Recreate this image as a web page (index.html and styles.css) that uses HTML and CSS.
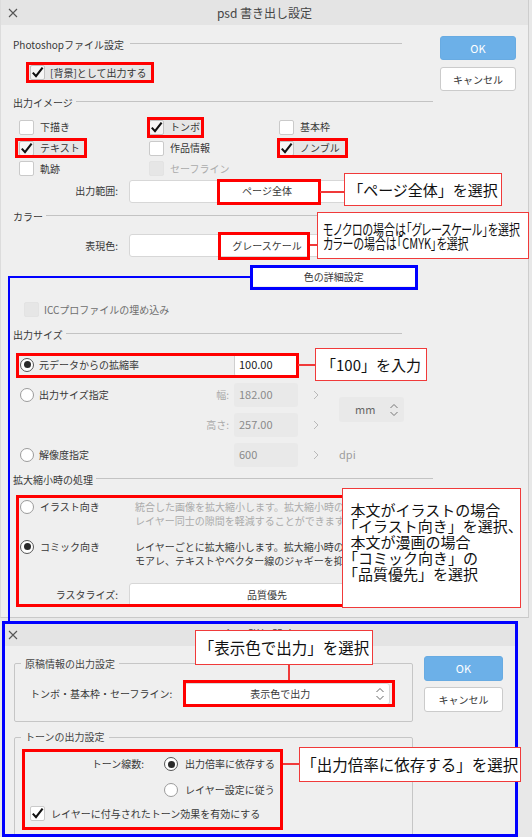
FILE: index.html
```html
<!DOCTYPE html>
<html lang="ja">
<head>
<meta charset="utf-8">
<title>psd 書き出し設定</title>
<link rel="stylesheet" href="styles.css">
</head>
<body>
<div class="canvas">

  <!-- Export dialog -->
  <section class="dialog-main">
    <header class="titlebar">
      <span class="close"><svg width="10" height="10" viewBox="0 0 10 10"><path d="M1 1L9 9M9 1L1 9" stroke="#555" stroke-width="1.1" fill="none"/></svg></span>
      <h1 class="title">psd 書き出し設定</h1>
      <span></span>
    </header>

    <div class="main-body">
      <div class="form">
        <div class="sec sec-short sec-first">Photoshopファイル設定</div>
        <label class="check check-bg">
          <span class="box"><svg width="15" height="15" viewBox="0 0 15 15"><path d="M2.8 7.6L6 11.2L12.6 2.6" fill="none" stroke="#111" stroke-width="2.1"/></svg></span>
          <span>[背景]として出力する</span>
        </label>

        <div class="sec sec-image">出力イメージ</div>
        <div class="opts">
          <label class="check"><span class="box"></span><span>下描き</span></label>
          <label class="check"><span class="box"><svg width="15" height="15" viewBox="0 0 15 15"><path d="M2.8 7.6L6 11.2L12.6 2.6" fill="none" stroke="#111" stroke-width="2.1"/></svg></span><span>トンボ</span></label>
          <label class="check"><span class="box"></span><span>基本枠</span></label>
          <label class="check"><span class="box"><svg width="15" height="15" viewBox="0 0 15 15"><path d="M2.8 7.6L6 11.2L12.6 2.6" fill="none" stroke="#111" stroke-width="2.1"/></svg></span><span>テキスト</span></label>
          <label class="check"><span class="box"></span><span>作品情報</span></label>
          <label class="check"><span class="box"><svg width="15" height="15" viewBox="0 0 15 15"><path d="M2.8 7.6L6 11.2L12.6 2.6" fill="none" stroke="#111" stroke-width="2.1"/></svg></span><span>ノンブル</span></label>
          <label class="check"><span class="box"></span><span>軌跡</span></label>
          <label class="check disabled"><span class="box off"></span><span>セーフライン</span></label>
        </div>

        <div class="field field-range">
          <span class="field-label">出力範囲:</span>
          <div class="select">ページ全体</div>
        </div>

        <div class="sec sec-color">カラー</div>
        <div class="field field-color">
          <span class="field-label">表現色:</span>
          <div class="select">グレースケール</div>
        </div>

        <div class="detail-row"><button class="detail-btn">色の詳細設定</button></div>

        <label class="check check-icc disabled-dark">
          <span class="box off"></span>
          <span>ICCプロファイルの埋め込み</span>
        </label>

        <div class="sec sec-short sec-size">出力サイズ</div>
        <div class="size-grid">
          <div class="opt"><span class="radio on"></span>元データからの拡縮率</div>
          <span></span>
          <div class="num on">100.00</div>
          <span></span>
          <span></span>

          <div class="opt"><span class="radio"></span>出力サイズ指定</div>
          <span class="num-label">幅:</span>
          <div class="num">182.00</div>
          <span class="chev"><svg width="6" height="10" viewBox="0 0 6 10"><path d="M1 1L5 5L1 9" fill="none" stroke="#b9b9b9" stroke-width="1"/></svg></span>
          <div class="unit"><span>mm</span><svg width="10" height="16" viewBox="0 0 10 16"><path d="M1.5 6L5 2.5L8.5 6M1.5 10L5 13.5L8.5 10" fill="none" stroke="#777" stroke-width="1"/></svg></div>

          <span></span>
          <span class="num-label">高さ:</span>
          <div class="num">257.00</div>
          <span class="chev"><svg width="6" height="10" viewBox="0 0 6 10"><path d="M1 1L5 5L1 9" fill="none" stroke="#b9b9b9" stroke-width="1"/></svg></span>

          <div class="opt"><span class="radio"></span>解像度指定</div>
          <span></span>
          <div class="num">600</div>
          <span class="chev"><svg width="6" height="10" viewBox="0 0 6 10"><path d="M1 1L5 5L1 9" fill="none" stroke="#b9b9b9" stroke-width="1"/></svg></span>
          <span class="dpi">dpi</span>
        </div>

        <div class="sec sec-resample">拡大縮小時の処理</div>
        <div class="method method-first">
          <div class="method-opt"><span class="radio"></span>イラスト向き</div>
          <p class="method-desc dim">統合した画像を拡大縮小します。拡大縮小時の<br>レイヤー同士の隙間を軽減することができます。</p>
        </div>
        <div class="method">
          <div class="method-opt"><span class="radio on"></span>コミック向き</div>
          <p class="method-desc">レイヤーごとに拡大縮小します。拡大縮小時の<br>モアレ、テキストやベクター線のジャギーを抑えることができます。</p>
        </div>
        <div class="field field-raster">
          <span class="field-label">ラスタライズ:</span>
          <div class="select">品質優先</div>
        </div>
      </div>

      <div class="actions">
        <button class="btn primary">OK</button>
        <button class="btn">キャンセル</button>
      </div>
    </div>
  </section>

  <!-- Colour detail dialog -->
  <section class="dialog-sub">
    <header class="titlebar sub-titlebar">
      <span class="close"><svg width="10" height="10" viewBox="0 0 10 10"><path d="M1 1L9 9M9 1L1 9" stroke="#555" stroke-width="1.1" fill="none"/></svg></span>
      <h1 class="title">色の詳細設定</h1>
      <span></span>
    </header>
    <div class="sub-body">
      <div class="sub-form">
        <fieldset class="group group-marks">
          <legend>原稿情報の出力設定</legend>
          <div class="group-in">
            <div class="sub-field">
              <span>トンボ・基本枠・セーフライン:</span>
              <div class="select sel-sub"><span class="sel-text">表示色で出力</span><svg width="10" height="16" viewBox="0 0 10 16"><path d="M1.5 6L5 2.5L8.5 6M1.5 10L5 13.5L8.5 10" fill="none" stroke="#666" stroke-width="1"/></svg></div>
            </div>
          </div>
        </fieldset>
        <fieldset class="group group-tone">
          <legend>トーンの出力設定</legend>
          <div class="group-in tone-in">
            <div class="tone-grid">
              <span class="tone-label">トーン線数:</span>
              <div class="opt"><span class="radio on"></span>出力倍率に依存する</div>
              <span></span>
              <div class="opt"><span class="radio"></span>レイヤー設定に従う</div>
            </div>
            <label class="check check-tone">
              <span class="box"><svg width="15" height="15" viewBox="0 0 15 15"><path d="M2.8 7.6L6 11.2L12.6 2.6" fill="none" stroke="#111" stroke-width="2.1"/></svg></span>
              <span>レイヤーに付与されたトーン効果を有効にする</span>
            </label>
          </div>
        </fieldset>
      </div>
      <div class="actions sub-actions">
        <button class="btn primary">OK</button>
        <button class="btn">キャンセル</button>
      </div>
    </div>
  </section>

  <!-- Instruction markup drawn over the dialogs -->
  <div class="notes">
    <div class="hl soft hl-bg"></div>
    <div class="hl soft hl-tombo"></div>
    <div class="hl soft hl-text"></div>
    <div class="hl soft hl-nombre"></div>

    <div class="hl hl-range"></div>
    <div class="wire w-range"></div>
    <div class="callout c-range">「ページ全体」を選択</div>

    <div class="hl hl-gray"></div>
    <div class="wire w-gray"></div>
    <div class="callout c-gray"><span class="squeeze">モノクロの場合は「グレースケール」を選択<br>カラーの場合は「CMYK」を選択</span></div>

    <div class="blue-box"></div>
    <div class="blue-line blue-h"></div>
    <div class="blue-line blue-v"></div>

    <div class="hl hl-scale"></div>
    <div class="wire w-scale"></div>
    <div class="callout c-scale">「100」を入力</div>

    <div class="hl hl-resample"></div>
    <div class="callout c-resample">本文がイラストの場合<br>「イラスト向き」を選択、<br>本文が漫画の場合<br>「コミック向き」の<br>「品質優先」を選択</div>

    <div class="callout c-marks">「表示色で出力」を選択</div>
    <div class="wire w-marks"></div>
    <div class="hl hl-marks"></div>

    <div class="hl hl-tone"></div>
    <div class="wire w-tone"></div>
    <div class="callout c-tone">「出力倍率に依存する」を選択</div>
  </div>
</div>
</body>
</html>
```

FILE: styles.css
```css
* { box-sizing: border-box; margin: 0; padding: 0; }

html, body { width: 532px; height: 837px; overflow: hidden; }

body {
  background: #e8e8e8;
  font-family: "Noto Sans CJK JP", "Noto Sans", sans-serif;
  font-size: 10px;
  line-height: 1;
  color: #383838;
}

.canvas { position: relative; width: 532px; height: 837px; overflow: hidden; }

/* ---------- dialog chrome ---------- */
.dialog-main {
  width: 529px;
  height: 618px;
  background: #efefef;
  border-left: 1px solid #dcdcdc;
  border-right: 1px solid #cdcdcd;
  border-bottom: 1px solid #c9c9c9;
}

.titlebar {
  height: 25px;
  background: #e4e4e4;
  display: grid;
  grid-template-columns: 30px 1fr 30px;
  align-items: center;
}

.close { display: flex; padding-left: 7px; }

.title { font-size: 12px; font-weight: normal; text-align: center; color: #444; }

.main-body { display: flex; padding-left: 12px; }

.form { width: 420px; display: flex; flex-direction: column; }

.actions {
  margin-left: 7px;
  width: 76px;
  padding-top: 11px;
  display: flex;
  flex-direction: column;
  gap: 7px;
}

.btn {
  height: 24px;
  border: 1px solid #cbcbcb;
  border-radius: 3px;
  background: #fff;
  font-family: inherit;
  font-size: 10px;
  color: #333;
}

.btn.primary { background: #6cb0e8; border-color: #68abe2; color: #fff; font-size: 11px; }

/* ---------- section headers ---------- */
.sec {
  height: 16px;
  display: flex;
  align-items: center;
  gap: 3px;
  white-space: nowrap;
  width: 420px;
}

.sec::after {
  content: "";
  flex: 1;
  height: 1px;
  background: #c3c3c3;
  margin-bottom: 3px;
}

.sec-short { width: 389px; }
.sec-first { margin-top: 11.5px; gap: 6px; }
.sec-image { margin-top: 13.5px; }
.sec-color { margin-top: 6px; }
.sec-size { margin-top: 8px; }
.sec-resample { margin-top: 5.5px; }

/* ---------- checkboxes & radios ---------- */
.check { display: flex; align-items: center; gap: 6px; height: 18px; white-space: nowrap; }

.box {
  width: 15px;
  height: 15px;
  flex: none;
  background: #fff;
  border: 1px solid #cacaca;
  border-radius: 2px;
  display: flex;
  align-items: center;
  justify-content: center;
}

.box svg { flex: none; }

.box.off { background: #e6e6e6; border-color: #e3e3e3; }

.disabled { color: #ababab; }
.disabled-dark { color: #6e6e6e; }

.radio {
  width: 14px;
  height: 14px;
  flex: none;
  border-radius: 50%;
  background: #fff;
  border: 1px solid #9b9b9b;
  display: flex;
  align-items: center;
  justify-content: center;
}

.radio.on { border-color: #555; }
.radio.on::after { content: ""; width: 7px; height: 7px; border-radius: 50%; background: #2a2a2a; }

.check-bg { margin-top: 11px; padding-left: 17px; gap: 5px; }

.opts {
  margin-top: 6.2px;
  padding-left: 6px;
  display: grid;
  grid-template-columns: repeat(3, 130px);
  grid-auto-rows: 20.6px;
}

.opts .check { height: 100%; }

/* ---------- select rows ---------- */
.field { display: flex; align-items: center; height: 23px; }

.field-label { width: 105px; flex: none; text-align: right; }

.select {
  margin-left: 11px;
  width: 276px;
  height: 100%;
  background: #fff;
  border: 1px solid #d7d7d7;
  border-radius: 3px;
  display: flex;
  align-items: center;
  justify-content: center;
}

.field-range { margin-top: 1px; }
.field-color { margin-top: 9.5px; }
.field-raster { margin-top: 15px; height: 24px; }

.detail-row { margin-top: 10.5px; height: 18px; padding-left: 239.5px; }

.detail-btn {
  width: 162.5px;
  height: 18px;
  border: none;
  background: #fff;
  font-family: inherit;
  font-size: 10px;
  color: #383838;
}

.check-icc { margin-top: 15px; padding-left: 11px; gap: 5px; }

/* ---------- output size grid ---------- */
.size-grid {
  margin-top: 10px;
  display: grid;
  grid-template-columns: 192px 29px 64px 41px 65px;
  grid-template-rows: repeat(4, 24px);
  row-gap: 6px;
}

.opt { display: flex; align-items: center; gap: 5px; padding-left: 7px; white-space: nowrap; }

.num-label {
  display: flex;
  align-items: center;
  justify-content: flex-end;
  padding-right: 5px;
  color: #a9a9a9;
}

.num {
  display: flex;
  align-items: center;
  padding-left: 5px;
  background: #e9e9e9;
  border-radius: 3px;
  font-size: 11px;
  color: #8a8a8a;
}

.num.on { background: #fff; color: #222; border: 1px solid #cfcfcf; padding-left: 4px; }

.chev { display: flex; align-items: center; padding-left: 15px; }

.unit {
  grid-column: 5;
  grid-row: 2 / span 2;
  align-self: center;
  height: 25px;
  background: #e9e9e9;
  border-radius: 3px;
  display: flex;
  align-items: center;
  justify-content: space-between;
  padding: 0 5px 0 16px;
  font-size: 11px;
  color: #666;
}

.dpi { display: flex; align-items: center; font-size: 11px; color: #9d9d9d; }

/* ---------- resampling methods ---------- */
.method { display: flex; height: 28px; margin-top: 12px; }
.method-first { margin-top: 11.5px; }

.method-opt { width: 122px; height: 14px; flex: none; display: flex; align-items: center; gap: 6px; padding-left: 7px; }

.method-desc { line-height: 14px; white-space: nowrap; color: #3a3a3a; }
.method-desc.dim { color: #ababab; }

/* ---------- colour detail dialog ---------- */
.dialog-sub {
  margin: 3px 0 0 2px;
  width: 516px;
  height: 216px;
  border: 3px solid #0000ff;
  background: #efefef;
  overflow: hidden;
}

.sub-titlebar { height: 21.5px; grid-template-columns: 26px 1fr 26px; }
.sub-titlebar .close { padding-left: 3px; }

.sub-body { display: flex; padding-left: 9px; }

.sub-form { width: 399px; }

.sub-actions { margin-left: 11px; width: 79px; padding-top: 10.5px; gap: 6.5px; }
.sub-actions .btn { height: 24.5px; }

.group { border: 1px solid #c6c6c6; border-radius: 2px; padding: 0; min-inline-size: 0; }

.group legend { margin-left: 6px; padding: 0 4px; line-height: 14px; font-size: 10px; color: #444; }

.group-marks { margin-top: 11px; }
.group-tone { margin-top: 8px; }

.group-in { padding: 12.5px 0 16px 15px; }
.tone-in { padding-top: 10px; padding-bottom: 30px; }

.sub-field { display: flex; align-items: center; height: 22px; white-space: nowrap; }

.sel-sub { margin-left: 12px; width: 206px; justify-content: space-between; padding-right: 4px; }
.sel-text { flex: 1; text-align: center; }

.tone-grid {
  display: grid;
  grid-template-columns: 114px auto;
  grid-template-rows: 20px 20px;
  row-gap: 5.6px;
  column-gap: 20px;
}

.tone-label { display: flex; align-items: center; justify-content: flex-end; }
.tone-grid .opt { padding-left: 0; gap: 7px; }

.check-tone { margin-top: 4.4px; height: 20px; }

/* ---------- instruction markup ---------- */
.notes { position: absolute; inset: 0; pointer-events: none; }

.hl { position: absolute; border: 3px solid #ff0000; }
.hl.soft { background: rgba(0, 0, 0, 0.035); }

.hl-bg { left: 26px; top: 62px; width: 128px; height: 21px; }
.hl-tombo { left: 146.5px; top: 116.5px; width: 57px; height: 21px; }
.hl-text { left: 15px; top: 137.5px; width: 71.5px; height: 20.5px; }
.hl-nombre { left: 276.5px; top: 137.5px; width: 71.5px; height: 20.5px; }
.hl-range { left: 216.5px; top: 179px; width: 104px; height: 26px; }
.hl-gray { left: 218px; top: 231.5px; width: 92px; height: 28px; }
.hl-scale { left: 16px; top: 352.5px; width: 283px; height: 25px; }
.hl-resample { left: 16px; top: 495px; width: 340px; height: 111.5px; }
.hl-marks { left: 183px; top: 680px; width: 211.5px; height: 27px; }
.hl-tone { left: 22px; top: 749px; width: 261px; height: 81px; }

.wire { position: absolute; background: #f03a3a; }
.w-range { left: 320px; top: 191px; width: 24px; height: 2px; }
.w-gray { left: 310px; top: 244px; width: 7px; height: 2px; }
.w-scale { left: 298px; top: 363.5px; width: 17px; height: 2px; }
.w-marks { left: 287.5px; top: 665px; width: 2px; height: 15px; }
.w-tone { left: 283px; top: 763px; width: 16px; height: 2px; }

.callout {
  position: absolute;
  background: #fff;
  border: 1.5px solid #f03a3a;
  color: #111;
  font-size: 15.5px;
  display: flex;
  align-items: center;
  justify-content: center;
  white-space: nowrap;
}

.c-range { left: 344px; top: 173px; width: 158px; height: 33px; font-size: 15px; }
.c-gray { left: 317px; top: 212px; width: 212px; height: 47px; justify-content: flex-start; padding-left: 5px; }
.c-scale { left: 315px; top: 348px; width: 112px; height: 33px; font-size: 15px; }
.c-resample {
  left: 341.5px; top: 488px; width: 179px; height: 120px;
  display: block;
  padding: 13px 0 0 8px;
  font-size: 15px;
  line-height: 16px;
  text-spacing-trim: trim-start;
}
.c-marks { left: 195px; top: 630px; width: 178px; height: 35px; }
.c-tone { left: 298.5px; top: 747px; width: 222.5px; height: 35px; }

.squeeze {
  display: block;
  font-size: 15px;
  line-height: 13.5px;
  font-feature-settings: "palt";
  transform: scaleX(0.73);
  transform-origin: left center;
}

.blue-box { position: absolute; left: 249.5px; top: 265px; width: 168.5px; height: 24.5px; border: 3px solid #0000ff; }
.blue-line { position: absolute; background: #0000ff; }
.blue-h { left: 8px; top: 275.5px; width: 241.5px; height: 2px; }
.blue-v { left: 8px; top: 275.5px; width: 2px; height: 346px; }
```
